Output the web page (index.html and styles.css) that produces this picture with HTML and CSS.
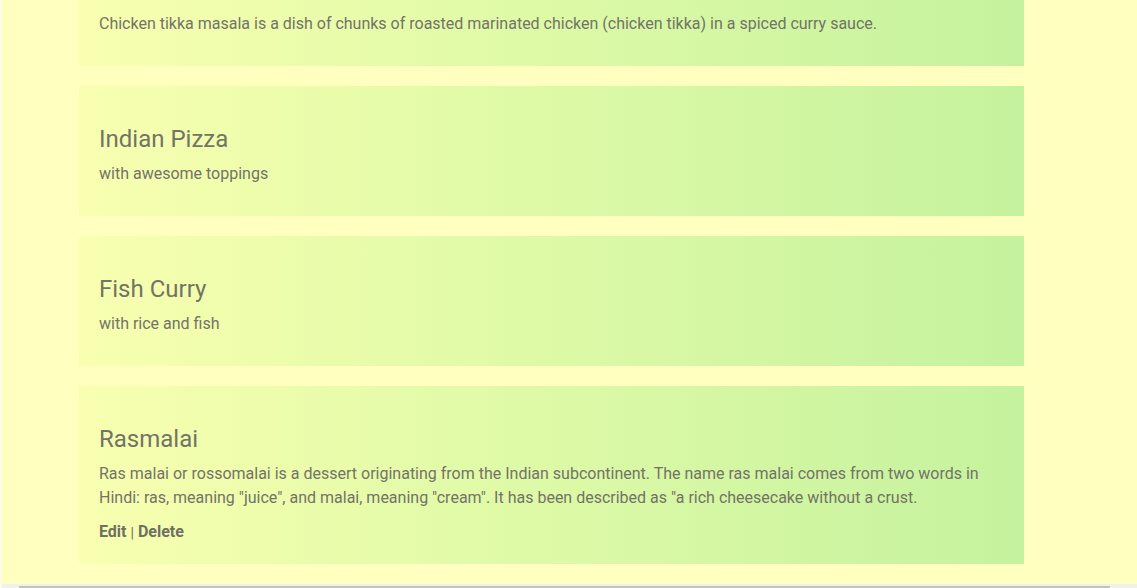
FILE: index.html
```html
<!DOCTYPE html>
<html lang="en">
<head>
<meta charset="utf-8">
<title>Menu</title>
<link rel="stylesheet" href="styles.css">
</head>
<body>
<div class="page">
  <main class="list">
    <article class="card">
      <h2 class="card-title">Chicken Tikka Masala</h2>
      <p class="card-text">Chicken tikka masala is a dish of chunks of roasted marinated chicken (chicken tikka) in a spiced curry sauce.</p>
    </article>
    <article class="card">
      <h2 class="card-title">Indian Pizza</h2>
      <p class="card-text">with awesome toppings</p>
    </article>
    <article class="card">
      <h2 class="card-title">Fish Curry</h2>
      <p class="card-text">with rice and fish</p>
    </article>
    <article class="card">
      <h2 class="card-title">Rasmalai</h2>
      <p class="card-text">Ras malai or rossomalai is a dessert originating from the Indian subcontinent. The name ras malai comes from two words in Hindi: ras, meaning "juice", and malai, meaning "cream". It has been described as "a rich cheesecake without a crust.</p>
      <div class="card-actions"><a href="#" class="action">Edit</a> <span class="sep">|</span> <a href="#" class="action">Delete</a></div>
    </article>
  </main>
  <div class="hbar"><div class="hbar-thumb"></div></div>
</div>
</body>
</html>
```

FILE: styles.css
```css
html, body {
  margin: 0;
  padding: 0;
  height: 100%;
  overflow: hidden;
  background: #fbfbe6;
}
body {
  font-family: Roboto, "Liberation Sans", sans-serif;
  color: #737367;
}
.page {
  margin-left: 2px;
  height: 588px;
  background: #ffffc0;
  display: flex;
  flex-direction: column;
  overflow: hidden;
}
.list {
  margin-top: -64px;
  margin-left: 77px;
  width: 945px;
  display: flex;
  flex-direction: column;
  gap: 20px;
  padding-bottom: 20px;
}
.card {
  padding: 39px 20px 20px;
  background: linear-gradient(to right, #f8ffb0 0%, #e2fba8 40%, #c5f29e 100%);
}
.card-title {
  margin: 0 0 9px;
  font-size: 24px;
  line-height: 28px;
  font-weight: 400;
  color: #737367;
}
.card-text {
  margin: 0 0 10px;
  font-size: 16px;
  line-height: 24px;
}
.card-actions {
  font-size: 16px;
  line-height: 24px;
}
.action {
  color: #6f6f63;
  font-weight: 700;
  text-decoration: none;
}
.sep {
  font-size: 14px;
  color: #6f6f63;
  position: relative;
  top: 1px;
}
.hbar {
  margin-top: auto;
  height: 4px;
  background: #f0f0ee;
  display: flex;
  align-items: flex-end;
  margin-left: -2px;
}
.hbar-thumb {
  margin-left: 19px;
  width: 1091px;
  height: 2px;
  background: #c2c2c2;
}
```
